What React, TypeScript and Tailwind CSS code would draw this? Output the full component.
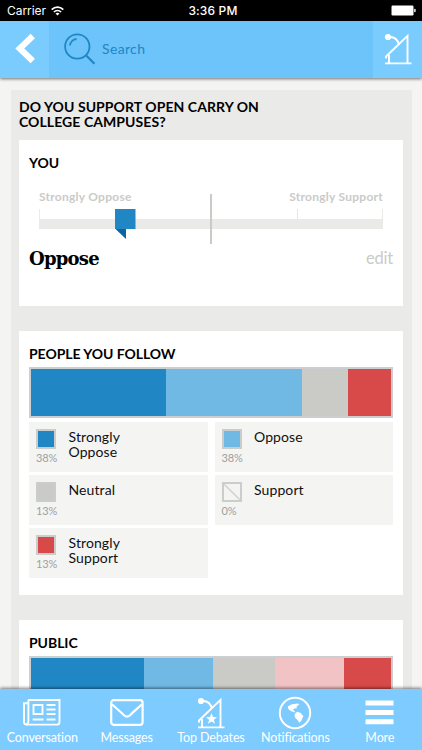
import type { ReactNode } from 'react';
import clsx from 'clsx';

interface Segment {
  color: string;
  width: number;
}

interface LegendEntry {
  label: string;
  percent: string;
  swatch: string | null;
}

const followSegments: Segment[] = [
  { color: 'bg-[#2186c4]', width: 134.5 },
  { color: 'bg-[#70b9e5]', width: 136.5 },
  { color: 'bg-[#cacac6]', width: 45.5 },
  { color: 'bg-[#d84a4a]', width: 43.5 },
];

const publicSegments: Segment[] = [
  { color: 'bg-[#2186c4]', width: 112.5 },
  { color: 'bg-[#70b9e5]', width: 69 },
  { color: 'bg-[#cacac6]', width: 62 },
  { color: 'bg-[#f2c3c4]', width: 69.5 },
  { color: 'bg-[#d84a4a]', width: 47 },
];

const legend: LegendEntry[] = [
  { label: 'Strongly Oppose', percent: '38%', swatch: 'bg-[#2186c4]' },
  { label: 'Oppose', percent: '38%', swatch: 'bg-[#70b9e5]' },
  { label: 'Neutral', percent: '13%', swatch: 'bg-[#cacac6]' },
  { label: 'Support', percent: '0%', swatch: null },
  { label: 'Strongly Support', percent: '13%', swatch: 'bg-[#d84a4a]' },
];

function PodiumIcon({ star = false }: { star?: boolean }) {
  return (
    <svg width="28" height="32" viewBox="0 0 28 32" fill="none" stroke="white" strokeWidth="1.9">
      <circle cx="4" cy="4" r="3.1" fill="white" stroke="none" />
      <path d="M5 4C10 3.5 13.5 6.5 15 11.5" strokeWidth="2" />
      <path d="M2 25.5V23.5L23.5 2.9V30" />
      <path d="M5 22V30M1 30.4H27.5" />
      {star && (
        <path
          d="M14.5 16l1.5 4 4.1.2-3.2 2.6 1.1 4-3.5-2.3-3.5 2.3 1.1-4-3.2-2.6 4.1-.2z"
          fill="white"
          stroke="none"
        />
      )}
    </svg>
  );
}

function NewspaperIcon() {
  return (
    <svg width="38" height="27" viewBox="0 0 38 27" fill="none" stroke="white" strokeWidth="1.9">
      <path d="M5 1H36.5V23Q36.5 25.6 34 25.6H3.5Q1 25.6 1 23V4.2H5" />
      <path d="M5.4 1V22Q5.4 25 3 25.6" />
      <rect x="10.5" y="6" width="9" height="9" />
      <path d="M23.5 6H32.5M23.5 10.5H32.5M23.5 15H32.5M9.6 20.5H20.5M23.5 20.5H32.5" />
    </svg>
  );
}

function EnvelopeIcon() {
  return (
    <svg width="34" height="27" viewBox="0 0 34 27" fill="none" stroke="white" strokeWidth="2.2">
      <rect x="1.2" y="1.2" width="31.4" height="24.6" rx="2.5" />
      <path d="M1.8 5.2C6 9 10 12.2 14 16.2Q17 19 20 16.2C24 12.2 28 9 32 5.2" />
    </svg>
  );
}

function GlobeIcon() {
  return (
    <svg width="34" height="34" viewBox="0 0 34 34" fill="none">
      <circle cx="17" cy="17" r="15.2" stroke="white" strokeWidth="2" />
      <path
        d="M10 10.2L14 8.3L20 7.4L21.4 8.6L18.5 10.5L19 12L16.2 12.8L14.8 14L16.5 15L17.2 16.4L14 15.6L11.2 14L9.8 11.8Z"
        fill="white"
      />
      <path d="M17.2 17.5L19.2 15.8L22.4 16.8L25.4 20.2L24.3 22.3L23.4 24.8L21.2 26.8L20 24.5L17.4 22L16.4 19.5Z" fill="white" />
    </svg>
  );
}

function MenuIcon() {
  return (
    <svg width="29" height="25" viewBox="0 0 29 25" fill="white">
      <rect x="0.5" y="0.5" width="28" height="5" rx="0.6" />
      <rect x="0.5" y="10" width="28" height="5" rx="0.6" />
      <rect x="0.5" y="19.3" width="28" height="5" rx="0.6" />
    </svg>
  );
}

function StatusBar() {
  return (
    <div className="grid h-[21px] grid-cols-3 items-center bg-black pr-[6px] pl-[7px] font-['Inter'] text-[12px] text-white">
      <div className="flex items-center gap-[5px]">
        <span className="tracking-[-0.05px]">Carrier</span>
        <svg width="13" height="10" viewBox="0 0 13 10" fill="none" stroke="white" strokeWidth="1.7">
          <path d="M0.7 3.6C4 0.3 9 0.3 12.3 3.6" />
          <path d="M2.9 6C5 4 8 4 10.1 6" />
          <path d="M6.5 9.6L4.5 7.5Q6.5 6 8.5 7.5Z" fill="white" stroke="none" />
        </svg>
      </div>
      <span className="pl-[3px] text-center font-medium tracking-[0.15px]">3:36 PM</span>
      <svg className="justify-self-end" width="25" height="11" viewBox="0 0 25 11" fill="white">
        <rect x="0.5" y="0.5" width="22" height="10" rx="1.2" />
        <rect x="23.2" y="3.8" width="1.4" height="3.4" rx="0.7" />
      </svg>
    </div>
  );
}

function TopBar() {
  return (
    <header className="z-10 flex h-[57px] shrink-0 bg-[#6dc4fa] shadow-[0_1px_3px_rgba(0,0,0,0.55)]">
      <button className="flex w-[49px] items-center bg-[#7accff] pb-[3px] pl-[15px]">
        <svg width="21" height="31" viewBox="0 0 21 31" fill="none" stroke="white" strokeWidth="6.2">
          <path d="M17.8 3L4.8 15.5L17.8 28" />
        </svg>
      </button>
      <div className="flex flex-1 items-center pb-[2px] pl-[15px]">
        <svg width="32" height="32" viewBox="0 0 32 32" fill="none" stroke="#2186c4" strokeWidth="1.8">
          <circle cx="13.3" cy="13.5" r="12.2" />
          <path d="M22 22.3L30.5 30.8" strokeWidth="2.2" />
          <path d="M6 12.5C6.3 9 9 6.3 12.5 6" />
        </svg>
        <span className="ml-[6px] text-[14px] tracking-[0.35px] text-[#2186c4]">Search</span>
      </div>
      <button className="flex w-[49px] items-center bg-[#7accff] pb-[2px] pl-[11px]">
        <PodiumIcon />
      </button>
    </header>
  );
}

function CardTitle({ children }: { children: ReactNode }) {
  return <h2 className="text-[14px] leading-[15px] font-bold tracking-[-0.05px]">{children}</h2>;
}

function OpinionSlider() {
  return (
    <div className="relative mx-[10px] mt-[20px] h-[54px]">
      <div className="flex justify-between text-[12px] leading-[14px] font-bold tracking-[0.25px] text-[#cacac8]">
        <span>Strongly Oppose</span>
        <span>Strongly Support</span>
      </div>
      <div className="mt-[5px] h-[20px] border-x border-b-[10px] border-[#eaeae9]" />
      <div className="absolute top-[19px] left-[257.5px] h-[10px] w-px bg-[#e5e5e4]" />
      <div className="absolute top-[4px] left-[171px] h-[50px] w-[2px] bg-[#cacac8]" />
      <svg className="absolute top-[19px] left-[76px]" width="21" height="30" viewBox="0 0 21 30">
        <rect width="20.5" height="20" fill="#2186c4" />
        <path d="M0.5 20H11V30Z" fill="#0d65a0" />
      </svg>
    </div>
  );
}

function StackedBar({ segments }: { segments: Segment[] }) {
  return (
    <div className="mt-[6px] flex h-[51px] border-2 border-[#cbcfd1]">
      {segments.map((s) => (
        <div key={s.color} className={s.color} style={{ width: s.width }} />
      ))}
    </div>
  );
}

function LegendItem({ label, percent, swatch }: LegendEntry) {
  return (
    <div className="flex h-[50px] bg-[#f4f4f3] pt-[7px] pl-[7px]">
      <div className="w-[32.5px]">
        <div className={clsx('size-[20px] border-2 border-[#cbcdcd]', swatch)}>
          {!swatch && (
            <svg width="16" height="16" viewBox="0 0 16 16" stroke="#d4d4d2" strokeWidth="1.6">
              <path d="M0 0L16 16" />
            </svg>
          )}
        </div>
        <div className="mt-[2px] text-[11px] leading-[14px] tracking-[-0.1px] text-[#a0a09e]">{percent}</div>
      </div>
      <div className="w-[70px] text-[14px] leading-[15px] tracking-[0.1px] text-[#111]">{label}</div>
    </div>
  );
}

const tabs = [
  { label: 'Conversation', icon: <NewspaperIcon /> },
  { label: 'Messages', icon: <EnvelopeIcon /> },
  { label: 'Top Debates', icon: <PodiumIcon star /> },
  { label: 'Notifications', icon: <GlobeIcon /> },
  { label: 'More', icon: <MenuIcon /> },
];

function TabBar() {
  return (
    <nav className="z-10 grid h-[61px] shrink-0 grid-cols-5 bg-[#7dcbff] text-white shadow-[0_-1px_3px_rgba(0,0,0,0.5)]">
      {tabs.map((tab) => (
        <button key={tab.label} className="flex flex-col items-center pt-[6px]">
          <span className="flex h-[35px] items-center">{tab.icon}</span>
          <span className="text-[12.5px] leading-[15px] tracking-[-0.13px] whitespace-nowrap">{tab.label}</span>
        </button>
      ))}
    </nav>
  );
}

export default function App() {
  return (
    <div className="flex h-[750px] w-full flex-col overflow-hidden bg-[#f4f4f3] font-['Lato',sans-serif] text-black">
      <StatusBar />
      <TopBar />
      <main className="min-h-0 flex-1 overflow-hidden pt-[12px] pr-[10px] pl-[10.5px]">
        <div className="bg-[#eaeae9] pt-[9px] pr-[9px] pl-[8.5px]">
          <h1 className="w-[270px] text-[14px] leading-[15px] font-bold tracking-[0.07px]">DO YOU SUPPORT OPEN CARRY ON COLLEGE CAMPUSES?</h1>

          <section className="mt-[11px] h-[166px] bg-white px-[10px] pt-[15px]">
            <CardTitle>YOU</CardTitle>
            <OpinionSlider />
            <div className="flex items-center justify-between">
              <span className="font-['DejaVu_Serif',serif] text-[18px] leading-[27px] font-bold tracking-[-0.75px]">Oppose</span>
              <button className="text-[16.5px] leading-[28px] tracking-[-0.2px] text-[#cacac8]">edit</button>
            </div>
          </section>

          <section className="mt-[25px] h-[264px] bg-white px-[10px] pt-[15px]">
            <CardTitle>PEOPLE YOU FOLLOW</CardTitle>
            <StackedBar segments={followSegments} />
            <div className="mt-[4px] grid grid-cols-2 gap-x-[7px] gap-y-[3px]">
              {legend.map((entry) => (
                <LegendItem key={entry.label} {...entry} />
              ))}
            </div>
          </section>

          <section className="mt-[25px] h-[264px] bg-white px-[10px] pt-[15px]">
            <CardTitle>PUBLIC</CardTitle>
            <StackedBar segments={publicSegments} />
          </section>
        </div>
      </main>
      <TabBar />
    </div>
  );
}
